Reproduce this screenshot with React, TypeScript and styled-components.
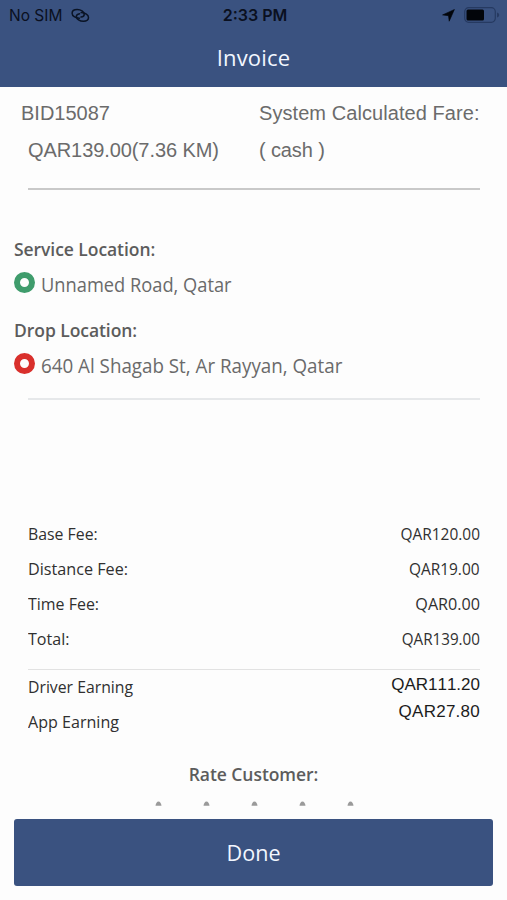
import React from "react";
import styled, { createGlobalStyle } from "styled-components";

const BLUE = "#3a5280";
const humanist = `"Open Sans", "Noto Sans", sans-serif`;
const grotesk = `"Liberation Sans", Arial, sans-serif`;

const GlobalStyle = createGlobalStyle`
  *, *::before, *::after { box-sizing: border-box; }
  body { margin: 0; background: #fdfdfd; }
`;

const Screen = styled.main`
  display: flex;
  flex-direction: column;
  width: 507px;
  height: 900px;
  overflow: hidden;
  background: #fdfdfd;
  font-family: ${humanist};
  white-space: nowrap;
`;

/* Slightly condensed run of text, anchored at one edge. */
const Narrow = styled.span<{ $x: number; $anchor?: "left" | "right" | "center" }>`
  display: inline-block;
  transform: scaleX(${(p) => p.$x});
  transform-origin: ${(p) => p.$anchor ?? "left"} center;
`;

const Header = styled.header`
  flex: none;
  height: 87px;
  background: ${BLUE};
`;

const StatusBar = styled.div`
  display: grid;
  grid-template-columns: 1fr auto 1fr;
  align-items: center;
  height: 30px;
  padding: 0 7px 0 9px;
  font-family: Inter, sans-serif;
  color: #0a1020;
`;

const Carrier = styled.div`
  display: flex;
  align-items: center;
  gap: 9px;
  font-size: 15.5px;
`;

const Clock = styled.div`
  padding-left: 1px;
  font-size: 16px;
  font-weight: 600;
`;

const StatusIcons = styled.div`
  display: flex;
  justify-content: flex-end;
  align-items: center;
  gap: 9px;
`;

const Title = styled.h1`
  margin: 0;
  line-height: 54px;
  text-align: center;
  font-size: 22px;
  font-weight: 400;
  letter-spacing: 0.2px;
  color: #f2f7ff;
`;

const Summary = styled.section`
  display: grid;
  grid-template-columns: 231px 1fr;
  grid-auto-rows: 37px;
  align-content: start;
  height: 103px;
  margin: 0 27px 0 28px;
  padding-top: 8px;
  border-bottom: 2px solid #c9c9c9;
  font-family: ${grotesk};
  font-size: 20px;
  line-height: 37px;
  color: #6b6b6b;
`;

const SummaryCell = styled.span<{ $outdent?: boolean; $track?: number }>`
  margin-left: ${(p) => (p.$outdent ? -7 : 0)}px;
  letter-spacing: ${(p) => p.$track ?? 0}px;
`;

const Locations = styled.section`
  height: 208px;
  padding: 44px 14px 0;
`;

const Place = styled.div`
  height: 81px;
`;

const Label = styled.h2`
  margin: 0;
  font-size: 17.5px;
  font-weight: 600;
  line-height: 30px;
  letter-spacing: -0.06px;
  color: #5c5c5c;
`;

const Address = styled.div`
  display: flex;
  gap: 6px;
  font-size: 19.5px;
  line-height: 42px;
  color: #6a6a6a;
`;

const Ring = styled.i<{ $color: string }>`
  flex: none;
  width: 21px;
  height: 21px;
  margin-top: 8px;
  border: 6px solid ${(p) => p.$color};
  border-radius: 50%;
`;

const Divider = styled.hr<{ $weight: number; $color: string }>`
  flex: none;
  width: 452px;
  height: ${(p) => p.$weight}px;
  margin: 0 0 0 28px;
  border: 0;
  background: ${(p) => p.$color};
`;

const Fees = styled.section`
  height: 269px;
  padding: 116px 27px 0 28px;
`;

const FeeRow = styled.div`
  display: flex;
  justify-content: space-between;
  font-size: 16.5px;
  line-height: 35px;
  color: #303030;
`;

const Earnings = styled.section`
  display: flex;
  justify-content: space-between;
  height: 87px;
  padding: 0 27px 0 28px;
`;

const EarningNames = styled.div`
  display: flex;
  flex-direction: column;
  font-size: 16.5px;
  line-height: 35px;
  margin-top: -1px;
  color: #303030;
`;

const EarningAmounts = styled.div`
  display: flex;
  flex-direction: column;
  align-items: flex-end;
  padding-top: 1px;
  font-family: ${grotesk};
  font-size: 17px;
  font-kerning: none;
  line-height: 27px;
  color: #1c1c1c;
`;

const EarningAmount = styled.span<{ $track?: number }>`
  letter-spacing: ${(p) => p.$track ?? 0}px;
`;

const Rating = styled.section`
  display: flex;
  flex-direction: column;
  align-items: center;
  height: 62px;
  padding-top: 2px;
`;

const Stars = styled.div`
  display: flex;
  gap: 41px;
  margin: 12px 0 0 1px;
`;

const DoneButton = styled.button`
  flex: none;
  width: 479px;
  height: 67px;
  margin-left: 14px;
  padding: 0 0 1px 1px;
  border: 0;
  border-radius: 3px;
  background: ${BLUE};
  color: #f2f7ff;
  font-family: ${humanist};
  font-size: 22px;
`;

const LinkIcon = () => (
  <svg width="19" height="15" viewBox="0 0 19 15" fill="none" stroke="#0a1425" strokeWidth="1.5" strokeLinecap="round">
    <path d="M8.400 10.200C4.300 10.100 1.100 8 1.100 5.200 1.100 2.900 3.300 1.500 6.200 1.500c3.700 0 6.900 2.100 7 4.700.1 1.600-1.200 2.700-3.200 2.900" />
    <path d="M10.200 4.600c4.100.1 7.300 2.200 7.300 5 0 2.300-2.200 3.700-5.100 3.700-3.700 0-6.900-2.100-7-4.700-.1-1.600 1.200-2.700 3.200-2.900" />
  </svg>
);

const ArrowIcon = () => (
  <svg width="13" height="13" viewBox="0 0 13 13" fill="#03060c" stroke="#03060c" strokeWidth=".6" strokeLinejoin="round">
    <path d="M12.400.5 7.200 12.200 6.500 6.700.6 5.900z" />
  </svg>
);

const BatteryIcon = () => (
  <svg width="36" height="16" viewBox="0 0 36 16">
    <rect x=".7" y=".7" width="30.600" height="14.600" rx="4" fill="none" stroke="#263a61" strokeWidth="1.200" />
    <rect x="2.500" y="2.500" width="17.500" height="11" rx="1.500" fill="#02050a" />
    <path d="M33 5.500c1.500.5 2.200 1.400 2.200 2.500S34.500 10 33 10.500z" fill="#263a61" />
  </svg>
);

const StarTip = () => (
  <svg width="7" height="5" viewBox="0 0 7 5">
    <path d="M.5 4.800C.8 2.600 2 .6 3.500.6s2.700 2 3 4.200z" fill="#9a9a9a" />
  </svg>
);

const fees = [
  { name: "Base Fee:", nameScale: 0.96, amount: "QAR120.00", amountScale: 0.935 },
  { name: "Distance Fee:", nameScale: 0.98, amount: "QAR19.00", amountScale: 0.935 },
  { name: "Time Fee:", nameScale: 0.967, amount: "QAR0.00", amountScale: 0.98 },
  { name: "Total:", nameScale: 0.975, amount: "QAR139.00", amountScale: 0.92 },
];

export default function App() {
  return (
    <Screen>
      <GlobalStyle />
      <Header>
        <StatusBar>
          <Carrier>No SIM <LinkIcon /></Carrier>
          <Clock>2:33 PM</Clock>
          <StatusIcons><ArrowIcon /><BatteryIcon /></StatusIcons>
        </StatusBar>
        <Title>Invoice</Title>
      </Header>
      <Summary>
        <SummaryCell $outdent>BID15087</SummaryCell>
        <SummaryCell $track={0.07}>System Calculated Fare:</SummaryCell>
        <SummaryCell $track={-0.08}>QAR139.00(7.36 KM)</SummaryCell>
        <SummaryCell $track={-0.12}>( cash )</SummaryCell>
      </Summary>
      <Locations>
        <Place>
          <Label>Service Location:</Label>
          <Address><Ring $color="#3f9c6c" /><Narrow $x={0.937}>Unnamed Road, Qatar</Narrow></Address>
        </Place>
        <Place>
          <Label>Drop Location:</Label>
          <Address><Ring $color="#d9302c" /><Narrow $x={0.963}>640 Al Shagab St, Ar Rayyan, Qatar</Narrow></Address>
        </Place>
      </Locations>
      <Divider $weight={2} $color="#e6e8ea" />
      <Fees>
        {fees.map((f) => (
          <FeeRow key={f.name}>
            <Narrow $x={f.nameScale}>{f.name}</Narrow>
            <Narrow $x={f.amountScale} $anchor="right">{f.amount}</Narrow>
          </FeeRow>
        ))}
      </Fees>
      <Divider $weight={1} $color="#e2e2e2" />
      <Earnings>
        <EarningNames>
          <Narrow $x={0.956}>Driver Earning</Narrow>
          <Narrow $x={0.975}>App Earning</Narrow>
        </EarningNames>
        <EarningAmounts>
          <EarningAmount>QAR111.20</EarningAmount>
          <EarningAmount $track={0.25}>QAR27.80</EarningAmount>
        </EarningAmounts>
      </Earnings>
      <Rating>
        <Label>Rate Customer:</Label>
        <Stars>{[1, 2, 3, 4, 5].map((n) => <StarTip key={n} />)}</Stars>
      </Rating>
      <DoneButton><Narrow $x={0.98} $anchor="center">Done</Narrow></DoneButton>
    </Screen>
  );
}
